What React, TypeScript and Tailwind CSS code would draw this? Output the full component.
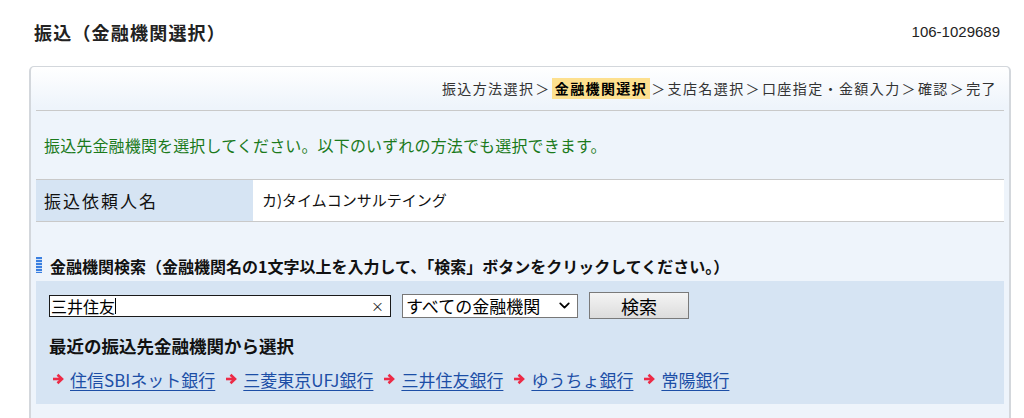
import { ChevronDown } from "lucide-react";

const banks = ["住信SBIネット銀行", "三菱東京UFJ銀行", "三井住友銀行", "ゆうちょ銀行", "常陽銀行"];

const steps = [
  { label: "振込方法選択", active: false },
  { label: "金融機関選択", active: true },
  { label: "支店名選択", active: false },
  { label: "口座指定・金額入力", active: false },
  { label: "確認", active: false },
  { label: "完了", active: false },
];

function RedArrow() {
  return (
    <svg width="12" height="12" viewBox="0 0 12 12" className="shrink-0">
      <path d="M1 6h8" stroke="#ec2a46" strokeWidth="2.6" />
      <path d="M5.5 1.8l4.5 4.2-4.5 4.2" stroke="#ec2a46" strokeWidth="2.6" fill="none" />
    </svg>
  );
}

export default function App() {
  return (
    <div className="w-[1024px] h-[418px] overflow-hidden bg-white font-['Noto_Sans_CJK_JP',sans-serif] text-[#222]">
      {/* header */}
      <div className="flex items-center justify-between h-[66px] pl-[34px] pr-[24px] pb-[3px]">
        <h1 className="text-[18px] font-bold leading-none tracking-[1.2px]">振込（金融機関選択）</h1>
        <span className="text-[15px] leading-none font-['Liberation_Sans','Noto_Sans_CJK_JP',sans-serif]">106-1029689</span>
      </div>

      {/* panel */}
      <div className="ml-[29px] mr-[13px] h-[400px] rounded-t-[5px] border-t border-x-2 border-[#d3d7dc] bg-[linear-gradient(to_bottom,#ffffff_0px,#eef4fb_40px)] px-[5px]">
        <div className="flex h-[43px] items-center justify-end pr-[7px] text-[14px] tracking-[1.4px] text-[#333]">
          {steps.map((s, i) => (
            <span key={s.label} className="flex items-center">
              {i > 0 && <span className="px-[1px]">＞</span>}
              <span className={s.active ? "bg-[#fde08f] px-[3px] font-bold text-black" : ""}>{s.label}</span>
            </span>
          ))}
        </div>
        <div className="border-t border-[#c9c9c9]" />
        <div className="flex h-[68px] items-center pl-[8px] text-[16px] tracking-[0.15px] text-[#1b7a1b]">
          振込先金融機関を選択してください。以下のいずれの方法でも選択できます。
        </div>
        <div className="flex h-[43px] border-y border-[#c9c9c9]">
          <div className="flex w-[217px] items-center bg-[#d6e4f3] pl-[8px] text-[17px] tracking-[2px] text-[#111]">振込依頼人名</div>
          <div className="flex flex-1 items-center bg-white pl-[9px] text-[15px] text-[#111]">カ)タイムコンサルテイング</div>
        </div>

        <div className="flex h-[59px] items-end pb-[7px]">
          <div className="mr-[8px] h-[16px] w-[6px] mb-[1px] bg-[repeating-linear-gradient(to_bottom,#3a7fe0_0px,#3a7fe0_2px,#cfe0f7_2px,#cfe0f7_3px)]" />
          <span className="text-[16px] font-bold leading-none text-[#111]">
            金融機関検索（金融機関名の1文字以上を入力して、「検索」ボタンをクリックしてください。）
          </span>
        </div>

        <div className="h-[123px] bg-[#d6e4f3] pl-[13px] pt-[11px]">
          <div className="flex h-[27px] items-center">
            <div className="relative flex h-[22px] w-[342px] items-center border-[1.5px] border-[#1a1a1a] bg-white pl-[1px]">
              <span className="text-[16px] leading-[18px] text-black">三井住友</span>
              <span className="h-[16px] w-[1px] bg-black" />
              <span className="absolute right-[6px] top-[1px] text-[13px] leading-[17px]">×</span>
            </div>
            <div className="ml-[11px] flex h-[24px] w-[176px] items-center justify-between border border-[#777] bg-white pl-[3px] pr-[4px]">
              <span className="text-[17px] leading-none text-black">すべての金融機関</span>
              <ChevronDown size={17} strokeWidth={2.5} className="text-black" />
            </div>
            <button className="ml-[11px] flex h-[27px] w-[100px] items-center justify-center border border-[#7a7a7a] bg-[linear-gradient(to_bottom,#f4f4f4,#dcdcdc)] text-[18px] leading-none text-black">
              検索
            </button>
          </div>
          <div className="mt-[18px] text-[17.5px] font-bold leading-none text-[#111]">最近の振込先金融機関から選択</div>
          <div className="mt-[16px] flex items-center pl-[3px] text-[17px] leading-none">
            {banks.map((b) => (
              <span key={b} className="mr-[10px] flex items-center gap-[6px]">
                <RedArrow />
                <a href="#" className="text-[#1c4ea6] underline underline-offset-[3px]">{b}</a>
              </span>
            ))}
          </div>
        </div>
      </div>
    </div>
  );
}
